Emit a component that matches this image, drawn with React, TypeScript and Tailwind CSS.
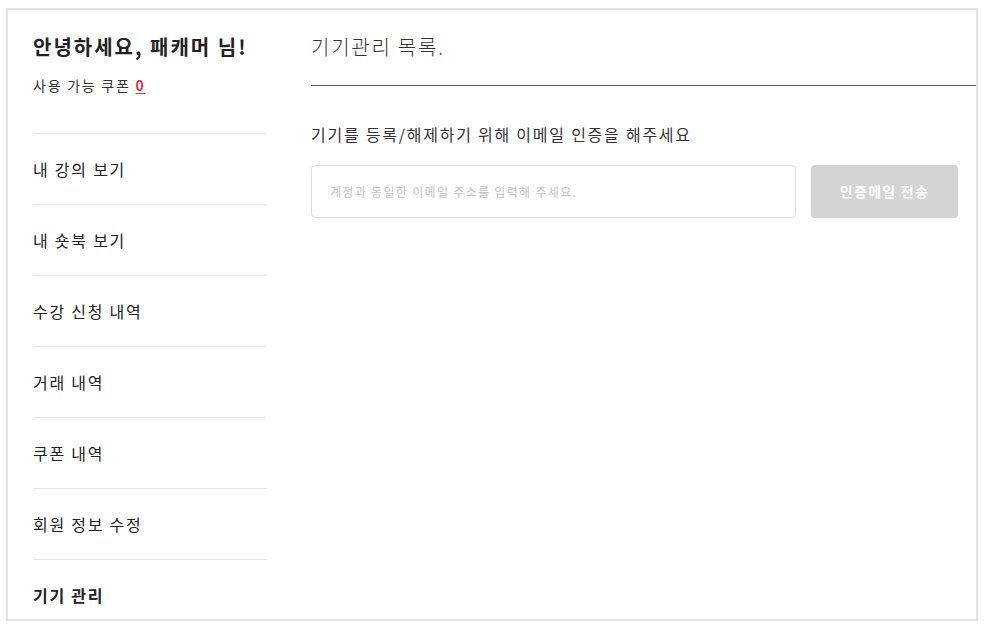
import React from "react";

const menu = ["내 강의 보기", "내 숏북 보기", "수강 신청 내역", "거래 내역", "쿠폰 내역", "회원 정보 수정"];

export default function App() {
  return (
    <div className="w-[987px] h-[628px] bg-white pt-[8px] pl-[6px] font-['Noto_Sans_CJK_KR',sans-serif] tracking-[0.11em]">
      <div className="w-[972px] h-[613px] border-2 border-[#e3e3e3] overflow-hidden flex pl-[25px]">
        {/* Sidebar */}
        <aside className="w-[233px] shrink-0 pt-[23px]">
          <h1 className="text-[20px] leading-[28px] font-bold text-[#222] tracking-[0.1em]">안녕하세요, 패캐머 님!</h1>
          <p className="mt-[14px] text-[14px] leading-[20px] text-[#333]">
            사용 가능 쿠폰{" "}
            <span className="font-bold text-[#d0354a] underline underline-offset-2">0</span>
          </p>
          <ul className="mt-[38px]">
            {menu.map((m) => (
              <li key={m} className="h-[71px] border-t border-[#e8e8e8] flex items-center text-[16px] text-[#222]">
                {m}
              </li>
            ))}
            <li className="h-[71px] border-t border-[#e8e8e8] flex items-center text-[16px] font-bold text-[#222]">
              기기 관리
            </li>
          </ul>
        </aside>

        {/* Main */}
        <main className="flex-1 ml-[45px] pt-[23px]">
          <div className="border-b border-[#555] pb-[24px]">
            <h2 className="text-[20px] leading-[28px] text-[#333] font-light">
              기기관리 목록<span className="text-[#d0354a]">.</span>
            </h2>
          </div>
          <div className="pr-[18px]">
            <p className="mt-[36px] text-[16px] leading-[24px] text-[#333]">
              기기를 등록/해제하기 위해 이메일 인증을 해주세요
            </p>
            <div className="mt-[19px] flex gap-[15px]">
              <input
                className="w-[485px] h-[53px] border border-[#ddd] rounded-[4px] pl-[18px] text-[12px] tracking-[0.11em] text-[#333] placeholder:text-[#c2c2c2] outline-none"
                placeholder="계정과 동일한 이메일 주소를 입력해 주세요."
              />
              <button className="w-[147px] h-[53px] rounded-[4px] bg-[#d4d4d4] text-white text-[14px] font-bold tracking-[0.09em]">
                인증메일 전송
              </button>
            </div>
          </div>
        </main>
      </div>
    </div>
  );
}
